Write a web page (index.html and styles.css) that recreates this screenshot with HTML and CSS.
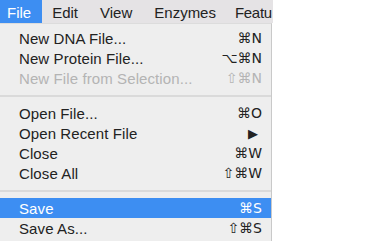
FILE: index.html
```html
<!DOCTYPE html>
<html lang="en">

<head>
    <meta charset="UTF-8">
    <link rel="stylesheet" href="styles.css">
    <title>File Menu</title>
</head>

<body>
    <div class="menubar">
        <span class="menu-title active">File</span>
        <span class="menu-title">Edit</span>
        <span class="menu-title">View</span>
        <span class="menu-title">Enzymes</span>
        <span class="menu-title last">Featu</span>
    </div>

    <ul class="menu">
        <li class="item"><span>New DNA File...</span><span class="key">⌘N</span></li>
        <li class="item"><span>New Protein File...</span><span class="key">⌥⌘N</span></li>
        <li class="item disabled"><span>New File from Selection...</span><span class="key">⇧⌘N</span></li>
        <li class="separator"></li>
        <li class="item"><span>Open File...</span><span class="key">⌘O</span></li>
        <li class="item"><span>Open Recent File</span><span class="key arrow">▶</span></li>
        <li class="item"><span>Close</span><span class="key">⌘W</span></li>
        <li class="item"><span>Close All</span><span class="key">⇧⌘W</span></li>
        <li class="separator"></li>
        <li class="item selected"><span>Save</span><span class="key">⌘S</span></li>
        <li class="item"><span>Save As...</span><span class="key">⇧⌘S</span></li>
    </ul>
</body>

</html>
```

FILE: styles.css
```css
body {
    margin: 0;
    font-family: "Liberation Sans", Arial, sans-serif;
    background: #ffffff;
    width: 273px;
    height: 241px;
    overflow: hidden;
}

.menubar {
    display: flex;
    height: 23px;
    background-color: #e5e3e5;
    font-size: 15px;
    color: #222222;
    white-space: nowrap;
    overflow: hidden;
}

.menu-title {
    display: flex;
    align-items: center;
    padding: 1px 12px 0 10px;
}

.menu-title.active {
    background-color: #3d8ef2;
    color: #ffffff;
    padding-left: 7px;
    padding-right: 11px;
}

.menu-title.last {
    padding-left: 7px;
    padding-right: 0;
    letter-spacing: -0.3px;
}

.menu {
    list-style: none;
    margin: 0;
    padding: 4px 0 0 0;
    width: 271px;
    height: 214px;
    background-color: #eeeeee;
    border-right: 1px solid #c9c9c9;
    border-top: 1px solid #dcdcdc;
    font-size: 15px;
    letter-spacing: 0.1px;
    color: #222222;
}

.item {
    display: flex;
    justify-content: space-between;
    align-items: center;
    height: 20px;
    padding: 0 9px 0 19px;
}

.item.disabled {
    color: #b4b4b4;
}

.item.selected {
    background-color: #3d8ef2;
    color: #ffffff;
}

.key {
    font-family: "DejaVu Sans", sans-serif;
    font-size: 14px;
    letter-spacing: 0;
}

.key.arrow {
    font-size: 13px;
    padding-right: 4px;
}

.separator {
    height: 15px;
    display: flex;
    align-items: center;
}

.separator::after {
    content: "";
    display: block;
    width: 100%;
    height: 2px;
    background-color: #dadada;
}
```
